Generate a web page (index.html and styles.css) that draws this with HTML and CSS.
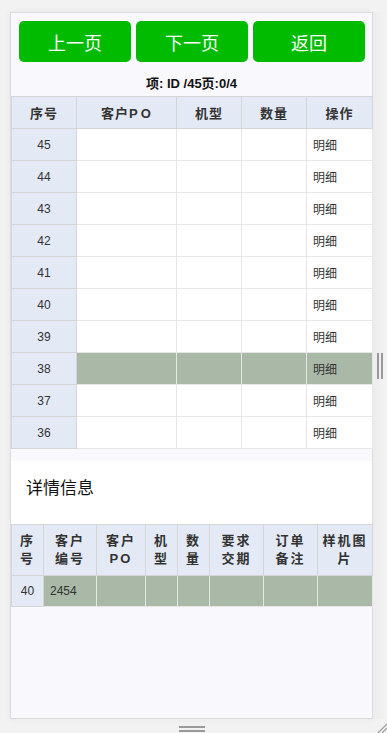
FILE: index.html
```html
<!DOCTYPE html>
<html lang="zh-CN">
<head>
  <meta charset="UTF-8">
  <meta name="viewport" content="width=device-width, initial-scale=1.0">
  <title>订单明细</title>
  <link rel="stylesheet" href="styles.css">
</head>
<body>
  <div class="stage">
    <div class="panel">
      <div class="btn-bar">
        <button class="btn">上一页</button>
        <button class="btn">下一页</button>
        <button class="btn">返回</button>
      </div>
      <p class="caption">项: ID /45页:0/4</p>

      <table class="grid list">
        <colgroup>
          <col style="width:65px">
          <col style="width:100px">
          <col style="width:65px">
          <col style="width:65px">
          <col style="width:66px">
        </colgroup>
        <thead>
          <tr><th>序号</th><th>客户P<span class="po">O</span></th><th>机型</th><th>数量</th><th>操作</th></tr>
        </thead>
        <tbody>
          <tr><td class="num">45</td><td></td><td></td><td></td><td class="op">明细</td></tr>
          <tr><td class="num">44</td><td></td><td></td><td></td><td class="op">明细</td></tr>
          <tr><td class="num">43</td><td></td><td></td><td></td><td class="op">明细</td></tr>
          <tr><td class="num">42</td><td></td><td></td><td></td><td class="op">明细</td></tr>
          <tr><td class="num">41</td><td></td><td></td><td></td><td class="op">明细</td></tr>
          <tr><td class="num">40</td><td></td><td></td><td></td><td class="op">明细</td></tr>
          <tr><td class="num">39</td><td></td><td></td><td></td><td class="op">明细</td></tr>
          <tr class="selected"><td class="num">38</td><td></td><td></td><td></td><td class="op">明细</td></tr>
          <tr><td class="num">37</td><td></td><td></td><td></td><td class="op">明细</td></tr>
          <tr><td class="num">36</td><td></td><td></td><td></td><td class="op">明细</td></tr>
        </tbody>
      </table>

      <div class="detail-head">详情信息</div>

      <table class="grid detail">
        <colgroup>
          <col style="width:32px">
          <col style="width:53px">
          <col style="width:49px">
          <col style="width:32px">
          <col style="width:32px">
          <col style="width:54px">
          <col style="width:54px">
          <col style="width:55px">
        </colgroup>
        <thead>
          <tr>
            <th>序<br>号</th>
            <th>客户<br>编号</th>
            <th>客户<br>PO</th>
            <th>机<br>型</th>
            <th>数<br>量</th>
            <th>要求<br>交期</th>
            <th>订单<br>备注</th>
            <th>样机图<br>片</th>
          </tr>
        </thead>
        <tbody>
          <tr class="selected"><td class="num">40</td><td class="op">2454</td><td></td><td></td><td></td><td></td><td></td><td></td></tr>
        </tbody>
      </table>
    </div>

    <div class="side-grip">
      <span></span><span></span>
    </div>
  </div>

  <div class="bottom-grip">
    <span></span><span></span>
    <svg class="corner" width="10" height="10" viewBox="0 0 10 10">
      <path d="M1 10 L10 1 M5 10 L10 5" stroke="#9a9a9a" stroke-width="1.2" fill="none"/>
    </svg>
  </div>
</body>
</html>
```

FILE: styles.css
```css
html, body {
  margin: 0;
  height: 100%;
}

body {
  font-family: "Liberation Sans", "Noto Sans CJK SC", sans-serif;
  background-color: #f2f2f2;
  display: flex;
  flex-direction: column;
  overflow: hidden;
}

.stage {
  display: flex;
  padding: 12px 0 0 10px;
}

.panel {
  width: 361px;
  height: 705px;
  background-color: #f9f8fd;
  border: 1px solid #dcdcdc;
  box-shadow: 0 0 6px rgba(0, 0, 0, 0.06);
}

.btn-bar {
  display: flex;
  gap: 5px;
  padding: 8px 7px 0 8px;
}

.btn {
  flex: 1;
  height: 41px;
  background-color: #00bb00;
  color: #fff;
  border: none;
  border-radius: 5px;
  font-family: "Liberation Sans", "Noto Sans CJK SC", sans-serif;
  font-size: 18px;
  cursor: pointer;
}

.caption {
  margin: 0;
  padding: 12px 0 2px;
  line-height: 20px;
  text-align: center;
  font-size: 13px;
  font-weight: bold;
  color: #111;
}

.grid {
  width: 361px;
  border-collapse: collapse;
  table-layout: fixed;
  font-size: 12px;
  color: #333;
}

.grid th {
  background-color: #e3eaf5;
  border: 1px solid #d5d5d5;
  font-size: 13px;
  font-weight: bold;
  letter-spacing: 1px;
  color: #333;
  padding: 0;
}

.grid th .po {
  margin-left: 2px;
}

.grid td {
  height: 31px;
  padding: 0;
  background-color: #fff;
  border: 1px solid #e6e6e6;
}

.list th {
  height: 31px;
}

.grid td.num {
  background-color: #e3eaf5;
  border-color: #d5d5d5;
  text-align: center;
}

.grid td.op {
  padding-left: 6px;
}

.grid tr.selected td {
  background-color: #aab9a7;
}

.grid tr.selected td.num {
  background-color: #e3eaf5;
}

.detail-head {
  margin-top: 12px;
  height: 63px;
  line-height: 55px;
  padding-left: 15px;
  background-color: #fff;
  font-size: 17px;
  color: #111;
}

.detail th {
  height: 50px;
  line-height: 18px;
  letter-spacing: 2px;
}

.detail td {
  height: 30px;
}

.side-grip {
  width: 14px;
  display: flex;
  align-items: center;
  justify-content: center;
  gap: 2px;
  background: linear-gradient(to right, #ececec, #f3f3f3);
}

.side-grip span {
  width: 2px;
  height: 26px;
  background-color: #999;
}

.bottom-grip {
  position: relative;
  flex: 1;
  display: flex;
  flex-direction: column;
  align-items: center;
  gap: 2px;
  padding-top: 7px;
  margin-right: 14px;
  margin-left: 10px;
}

.bottom-grip span {
  width: 26px;
  height: 2px;
  background-color: #9a9a9a;
}

.corner {
  position: absolute;
  right: -14px;
  bottom: 0;
}
```
